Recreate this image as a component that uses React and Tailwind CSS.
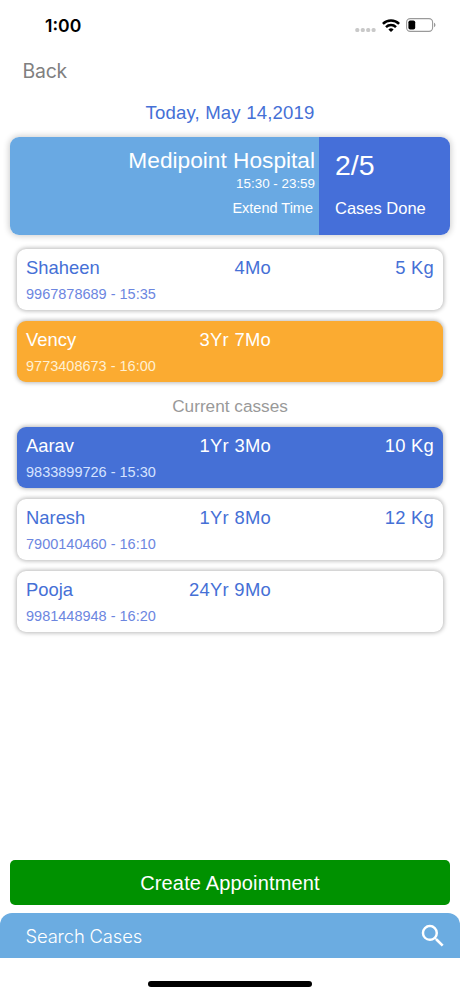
const HELV = "font-['Liberation_Sans',Arial,sans-serif]";
const SYSTEM = "font-['Inter','Roboto',sans-serif]";

const TONES = {
  plain: { card: 'bg-white', name: 'text-[#4570d6]', phone: 'text-[#6c86df]' },
  waiting: { card: 'bg-[#fbab31]', name: 'text-white', phone: 'text-[#fff0d2]' },
  current: { card: 'bg-[#4570d6]', name: 'text-white', phone: 'text-[#d6e3ff]' },
};

const ARRIVED = [
  { name: 'Shaheen', phone: '9967878689 - 15:35', age: '4Mo', weight: '5 Kg', tone: 'plain' },
  { name: 'Vency', phone: '9773408673 - 16:00', age: '3Yr 7Mo', weight: '', tone: 'waiting' },
];

const CURRENT = [
  { name: 'Aarav', phone: '9833899726 - 15:30', age: '1Yr 3Mo', weight: '10 Kg', tone: 'current' },
  { name: 'Naresh', phone: '7900140460 - 16:10', age: '1Yr 8Mo', weight: '12 Kg', tone: 'plain' },
  { name: 'Pooja', phone: '9981448948 - 16:20', age: '24Yr 9Mo', weight: '', tone: 'plain' },
];

function StatusBar() {
  return (
    <div className="flex h-[50px] items-center justify-between pl-[45px] pr-[24px]">
      <span className={`${SYSTEM} mt-[2px] text-[17.6px] font-semibold leading-5 text-black`}>1:00</span>
      <div className="flex items-center">
        <svg className="mt-[9px] h-1 w-[21px]" viewBox="0 0 21 4" fill="#c9c9c9">
          <rect x="0.3" y="0" width="4" height="4" rx="1.6" />
          <rect x="5.8" y="0" width="4" height="4" rx="1.6" />
          <rect x="11.2" y="0" width="4" height="4" rx="1.6" />
          <rect x="16.6" y="0" width="4" height="4" rx="1.6" />
        </svg>
        <svg className="ml-[6px] h-[13px] w-[18px]" viewBox="0 0 18 13" fill="none" stroke="#000" strokeWidth="2.5">
          <path d="M0.9 4.9a11.5 11.5 0 0 1 16.2 0" />
          <path d="M4 8.1a7.1 7.1 0 0 1 10 0" />
          <path d="M6.4 10.5a3.7 3.7 0 0 1 5.2 0L9 13z" fill="#000" stroke="none" />
        </svg>
        <svg className="ml-[6px] h-[14px] w-[30px]" viewBox="0 0 30 14">
          <rect x="0.6" y="0.6" width="26" height="12.8" rx="3.6" fill="none" stroke="#9a9a9a" strokeWidth="1.1" />
          <rect x="2.4" y="2.4" width="6.8" height="9.2" rx="1.8" fill="#000" />
          <path d="M28 4.8c1.9.7 1.9 3.7 0 4.4z" fill="#9a9a9a" />
        </svg>
      </div>
    </div>
  );
}

function CaseCard({ item }) {
  const tone = TONES[item.tone];
  return (
    <div className={`flex h-[61px] rounded-[9px] pl-[9px] pr-[9px] pt-[8px] shadow-[0_0_4px_1px_rgba(0,0,0,0.28)] ${tone.card}`}>
      <div className="w-[130px]">
        <div className={`text-[18.4px] leading-[22px] ${tone.name}`}>{item.name}</div>
        <div className={`mt-[5px] text-[14.5px] leading-[20px] ${tone.phone}`}>{item.phone}</div>
      </div>
      <div className={`w-[115px] text-right text-[18.4px] tracking-[0.28px] leading-[22px] ${tone.name}`}>{item.age}</div>
      <div className={`flex-1 text-right text-[18.4px] tracking-[0.25px] leading-[22px] ${tone.name}`}>{item.weight}</div>
    </div>
  );
}

function CaseList({ items }) {
  return (
    <div className="flex flex-col gap-[11px] px-[17px]">
      {items.map((item) => (
        <CaseCard key={item.name} item={item} />
      ))}
    </div>
  );
}

export default function App() {
  return (
    <div className={`flex h-[996px] w-[460px] flex-col overflow-hidden bg-white whitespace-nowrap ${HELV}`}>
      <StatusBar />
      <div className={`${SYSTEM} flex h-[44px] items-center pl-[22.5px] text-[19.4px] tracking-[-0.2px] text-[#808080]`}>
        Back
      </div>
      <div className="h-[43px] pt-[7px] text-center text-[18.6px] tracking-[0.16px] leading-[24px] text-[#4570d6]">
        Today, May 14,2019
      </div>

      <div className="mx-[10px] flex h-[98px] shrink-0 overflow-hidden rounded-[9px] text-white shadow-[0_0_6px_1px_rgba(0,0,0,0.2)]">
        <div className="w-[309px] bg-[#69a9e3] pr-1 pt-[9px] text-right">
          <div className="text-[22.7px] leading-[28px]">Medipoint Hospital</div>
          <div className="mt-[2px] text-[13.4px] leading-[16px]">15:30 - 23:59</div>
          <div className="mt-[7px] pr-[2px] text-[14.5px] leading-[18px]">Extend Time</div>
        </div>
        <div className="flex-1 bg-[#456fd9] pl-[16px] pt-[12px]">
          <div className="text-[28.5px] leading-[32px]">2/5</div>
          <div className="mt-[17px] text-[16.5px] leading-[20px]">Cases Done</div>
        </div>
      </div>

      <div className="h-[14px]" />
      <CaseList items={ARRIVED} />
      <div className="h-[45px] pt-[12px] text-center text-[17.2px] leading-[24px] text-[#999]">Current casses</div>
      <CaseList items={CURRENT} />

      <div className="flex-1" />
      <button className="mx-[10px] h-[45px] shrink-0 rounded-[5px] bg-[#009100] text-[20px] tracking-[0.16px] text-white">
        Create Appointment
      </button>
      <div className="mt-[8px] flex h-[45px] shrink-0 items-center justify-between rounded-t-[12px] bg-[#6bace1] pl-[25.5px] pr-[12px] text-white">
        <span className={`${SYSTEM} mt-[2px] text-[18.4px] tracking-[-0.15px] font-light`}>Search Cases</span>
        <svg className="h-[30px] w-[30px]" viewBox="0 0 24 24" fill="currentColor">
          <path d="M15.5 14h-.79l-.28-.27A6.471 6.471 0 0 0 16 9.5 6.5 6.5 0 1 0 9.5 16c1.61 0 3.09-.59 4.23-1.57l.27.28v.79l5 4.99L20.49 19l-4.99-5zm-6 0C7.01 14 5 11.99 5 9.5S7.01 5 9.5 5 14 7.01 14 9.5 11.99 14 9.5 14z" />
        </svg>
      </div>
      <div className="flex h-[38px] shrink-0 justify-center pt-[23px]">
        <div className="h-[6px] w-[164px] rounded-full bg-black" />
      </div>
    </div>
  );
}
